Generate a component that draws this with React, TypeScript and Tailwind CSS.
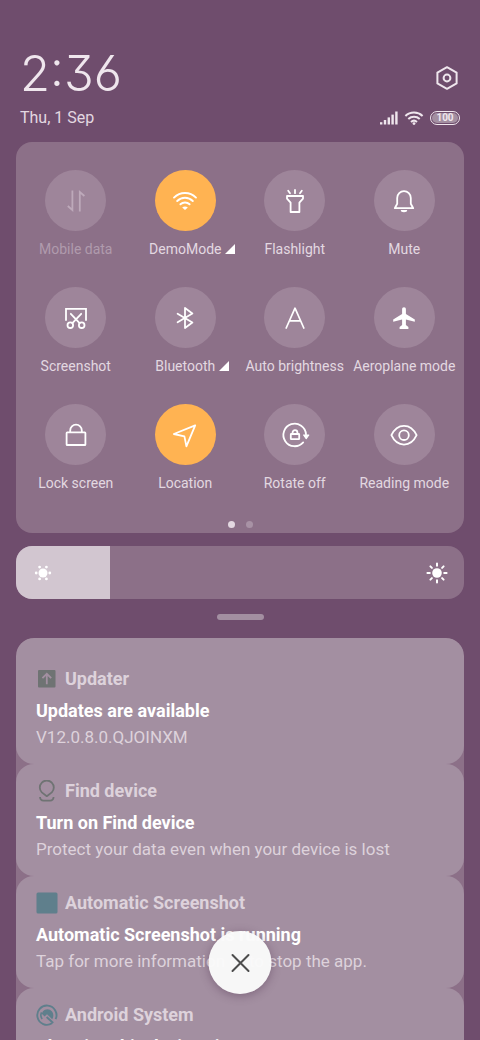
import { useState } from "react";
import type { ReactNode } from "react";

type Tile = {
  label: string;
  icon: ReactNode;
  active?: boolean;
  disabled?: boolean;
  expandable?: boolean;
};

type Notice = {
  app: string;
  title: string;
  text: string;
  icon: ReactNode;
};

function TileIcon({ children }: { children: ReactNode }) {
  return (
    <svg
      viewBox="0 0 30 30"
      className="h-[30px] w-[30px]"
      fill="none"
      stroke="currentColor"
      strokeWidth="1.8"
      strokeLinecap="round"
      strokeLinejoin="round"
      aria-hidden="true"
    >
      {children}
    </svg>
  );
}

const tiles: Tile[] = [
  {
    label: "Mobile data",
    disabled: true,
    icon: (
      <TileIcon>
        <path d="M11.4 4.5V24l-4.6-4M18.8 25.5V6l4.6 4" strokeLinecap="butt" strokeLinejoin="miter" />
      </TileIcon>
    ),
  },
  {
    label: "DemoMode",
    active: true,
    expandable: true,
    icon: (
      <TileIcon>
        <path d="M4 11.6a15.6 15.6 0 0 1 22 0M7.2 15a11 11 0 0 1 15.600 0M10.400 18.300a6.600 6.600 0 0 1 9.200 0" strokeWidth="1.9" />
        <path d="M15 24l-2.800-2.400a3.900 3.900 0 0 1 5.600 0z" fill="currentColor" stroke="none" />
      </TileIcon>
    ),
  },
  {
    label: "Flashlight",
    icon: (
      <TileIcon>
        <path d="M15 4v3.200M8.200 4.800l1.800 2.400M21.800 4.800L20 7.200" />
        <path d="M7 10h16v2.600l-3.600 4V26h-8.800v-9.400L7 12.600z" />
      </TileIcon>
    ),
  },
  {
    label: "Mute",
    icon: (
      <TileIcon>
        <path d="M5.800 22.200h18.400l-2.400-4.400v-5.800a6.800 6.800 0 0 0-13.600 0v5.800z" />
        <path d="M11.800 24h6.400a3.200 2.200 0 0 1-6.400 0z" fill="currentColor" stroke="none" />
      </TileIcon>
    ),
  },
  {
    label: "Screenshot",
    icon: (
      <TileIcon>
        <path d="M5 17V5.800h20V17" strokeLinejoin="miter" />
        <path d="M9.800 10.800l8.800 9.400M20.200 10.800l-8.800 9.400" />
        <circle cx="9.3" cy="22.2" r="2.8" />
        <circle cx="20.7" cy="22.2" r="2.8" />
      </TileIcon>
    ),
  },
  {
    label: "Bluetooth",
    expandable: true,
    icon: (
      <TileIcon>
        <path d="M7.600 10.800l14.800 8.800L15 25V5l7.400 5.400-14.800 8.800" />
      </TileIcon>
    ),
  },
  {
    label: "Auto brightness",
    icon: (
      <TileIcon>
        <path d="M6.200 25L15 5.200 23.800 25M9.600 17.800h10.800" strokeWidth="1.7" />
      </TileIcon>
    ),
  },
  {
    label: "Aeroplane mode",
    icon: (
      <TileIcon>
        <path
          d="M15 4.200c1.300 0 1.900.9 1.900 2.200v4.700l8.900 5.300v2.300l-8.900-2.300v5.600l2.500 2v2h-8.800v-2l2.500-2v-5.600l-8.900 2.300v-2.300l8.900-5.300V6.400c0-1.300.6-2.200 1.900-2.200z"
          fill="currentColor"
          stroke="none"
        />
      </TileIcon>
    ),
  },
  {
    label: "Lock screen",
    icon: (
      <TileIcon>
        <rect x="5.6" y="12.4" width="18.8" height="12.6" rx="0.6" />
        <path d="M9.200 12.200v-1.800a5.800 5.800 0 0 1 11.600 0v1.800" />
      </TileIcon>
    ),
  },
  {
    label: "Location",
    active: true,
    icon: (
      <TileIcon>
        <path d="M25.200 5.400L3.800 14l10.600 2.400 2 10z" />
      </TileIcon>
    ),
  },
  {
    label: "Rotate off",
    icon: (
      <TileIcon>
        <path d="M26 14.400A11.300 11.300 0 1 0 23.200 22.400" />
        <path d="M23.600 15h5.200l-2.600 3.600z" fill="currentColor" strokeWidth="1.2" />
        <rect x="10.8" y="14" width="8.4" height="5.200" rx="0.5" />
        <path d="M12.600 13.800v-1.200a2.400 2.400 0 0 1 4.800 0v1.200" />
      </TileIcon>
    ),
  },
  {
    label: "Reading mode",
    icon: (
      <TileIcon>
        <path d="M2.400 15.200C5.200 9.200 9.600 5.800 15 5.800s9.800 3.400 12.600 9.400c-2.800 6-7.200 9.400-12.600 9.400S5.200 21.200 2.400 15.200z" />
        <circle cx="15" cy="15.2" r="4.8" />
      </TileIcon>
    ),
  },
];

const notices: Notice[] = [
  {
    app: "Updater",
    title: "Updates are available",
    text: "V12.0.8.0.QJOINXM",
    icon: (
      <svg viewBox="0 0 22 22" className="h-[22px] w-[22px]" aria-hidden="true">
        <rect x="2" y="2" width="17.5" height="17.5" rx="1" fill="#6f7373" />
        <path d="M10.800 16.200V6M6.400 10.200l4.400-4.400 4.400 4.400" fill="none" stroke="#a38fa1" strokeWidth="1.8" />
      </svg>
    ),
  },
  {
    app: "Find device",
    title: "Turn on Find device",
    text: "Protect your data even when your device is lost",
    icon: (
      <svg viewBox="0 0 22 22" className="h-[22px] w-[22px]" fill="none" stroke="#6f7373" strokeWidth="1.8" aria-hidden="true">
        <path d="M10.800 16.200L5.800 12.400a7 7 0 1 1 10 0z" strokeLinejoin="round" />
        <path d="M4 17c.2 2.200 1.400 3.600 3.400 3.600h6.800c2 0 3.200-1.400 3.400-3.600" />
      </svg>
    ),
  },
  {
    app: "Automatic Screenshot",
    title: "Automatic Screenshot is running",
    text: "Tap for more information or to stop the app.",
    icon: (
      <svg viewBox="0 0 22 22" className="h-[22px] w-[22px]" aria-hidden="true">
        <rect x="0.5" y="0.5" width="21" height="21" rx="1.5" fill="#5f7f8c" />
      </svg>
    ),
  },
  {
    app: "Android System",
    title: "Charging this device via USB",
    text: "Tap for more options.",
    icon: (
      <svg viewBox="0 0 22 22" className="h-[22px] w-[22px]" fill="none" stroke="#5f7f8c" aria-hidden="true">
        <path d="M16 19.300A9.600 9.600 0 1 1 19.600 15.200" strokeWidth="1.9" />
        <path d="M6.200 15a6.200 6.200 0 0 1-.6-6.600" strokeWidth="1.6" />
        <path d="M6.800 7.400C9.400 4.400 13.600 4.600 15.800 7.200c2 2.400 2 5.600.4 8L11 10.200 8.600 12.400 5.800 9.800z" fill="#5f7f8c" stroke="none" />
        <path d="M10.600 13l6.600 6" strokeWidth="1.9" />
      </svg>
    ),
  },
];

function QuickTile({ tile }: { tile: Tile }) {
  const [on, setOn] = useState(Boolean(tile.active));
  const circle = on ? "bg-[#ffb352]" : "bg-[#9e859a]";

  return (
    <button
      type="button"
      disabled={tile.disabled}
      aria-pressed={on}
      onClick={() => setOn(!on)}
      className="flex min-w-0 flex-col items-center gap-2"
    >
      <span
        className={`flex h-[61px] w-[61px] items-center justify-center rounded-full ${circle} ${
          tile.disabled ? "text-[#bda9ba]" : "text-white"
        }`}
      >
        {tile.icon}
      </span>
      <span
        className={`flex items-center text-[14px] leading-5 whitespace-nowrap ${
          tile.disabled ? "text-[#b09bad]" : "text-[#e3d8e1]"
        }`}
      >
        {tile.label}
        {/* the arrow hangs outside so the label itself stays centred */}
        {tile.expandable && (
          <svg viewBox="0 0 10 10" className="-mr-[14px] ml-1 h-[10px] w-[10px]" aria-hidden="true">
            <path d="M10 0v10H0z" fill="#fff" />
          </svg>
        )}
      </span>
    </button>
  );
}

function StatusIcons() {
  return (
    <div className="flex items-center gap-[6px] text-[#efe6ed]">
      <svg viewBox="0 0 18 14" className="h-[14px] w-[18px]" fill="currentColor" aria-hidden="true">
        <rect x="0" y="11.2" width="2.4" height="2.3" />
        <rect x="3.8" y="9" width="2.4" height="4.5" />
        <rect x="7.6" y="6.4" width="2.4" height="7.1" />
        <rect x="11.4" y="3.6" width="2.4" height="9.9" />
        <rect x="15.2" y="0.5" width="2.4" height="13" />
      </svg>
      <svg viewBox="0 0 20 14" className="h-[14px] w-[20px]" fill="none" stroke="currentColor" strokeWidth="2" aria-hidden="true">
        <path d="M1.400 5a12.600 12.600 0 0 1 17.200 0M4.300 8.100a8.400 8.400 0 0 1 11.400 0M7 11a4.500 4.500 0 0 1 6 0" />
        <circle cx="10" cy="12.6" r="1.4" fill="currentColor" stroke="none" />
      </svg>
      <span className="flex h-[14px] w-[30px] items-center justify-center rounded-full border border-[#efe6ed] p-px">
        <span className="flex h-full w-full items-center justify-center rounded-full bg-[#a38fa1] text-[10px] leading-none font-bold">
          100
        </span>
      </span>
    </div>
  );
}

function BrightnessSlider() {
  const [value, setValue] = useState(21);

  return (
    <div className="relative mx-4 mt-[13px] flex h-[53px] shrink-0 items-center justify-between overflow-hidden rounded-2xl bg-[#8c7088] px-4 text-white">
      <div className="absolute inset-y-0 left-0 bg-[#d2c6d0]" style={{ width: `${value}%` }} />
      <svg viewBox="0 0 22 22" className="relative h-[22px] w-[22px]" fill="currentColor" aria-hidden="true">
        <circle cx="11" cy="11" r="4.5" />
        <circle cx="4.2" cy="11" r="1.4" />
        <circle cx="17.8" cy="11" r="1.4" />
        <circle cx="7.6" cy="5.1" r="1.4" />
        <circle cx="14.4" cy="5.1" r="1.4" />
        <circle cx="7.6" cy="16.9" r="1.4" />
        <circle cx="14.4" cy="16.9" r="1.4" />
      </svg>
      <svg
        viewBox="0 0 22 22"
        className="relative h-[22px] w-[22px]"
        fill="none"
        stroke="currentColor"
        strokeWidth="2"
        strokeLinecap="round"
        aria-hidden="true"
      >
        <circle cx="11" cy="11" r="4.8" fill="currentColor" stroke="none" />
        <path d="M11 1.400v2.400M11 18.200v2.400M1.400 11h2.400M18.200 11h2.400M4.400 4.400l1.500 1.500M16.100 16.100l1.500 1.500M4.400 17.600l1.500-1.500M16.100 5.900l1.500-1.500" />
      </svg>
      <input
        type="range"
        min={0}
        max={100}
        value={value}
        onChange={(e) => setValue(Number(e.target.value))}
        aria-label="Brightness"
        className="absolute inset-0 h-full w-full cursor-pointer opacity-0"
      />
    </div>
  );
}

function NoticeCard({ notice }: { notice: Notice }) {
  return (
    <article className="rounded-[18px] bg-[#a38fa1] px-5 py-[15px] first:pt-[29px]">
      <div className="flex h-6 items-center gap-[7px]">
        {notice.icon}
        <span className="text-[18px] leading-6 font-bold text-[#ddd2db]">{notice.app}</span>
      </div>
      <h2 className="mt-[6px] text-[18px] leading-7 font-bold text-white">{notice.title}</h2>
      <p className="text-[17px] leading-6 text-[#ddd2db]">{notice.text}</p>
    </article>
  );
}

export default function App() {
  return (
    <main className="relative flex h-screen flex-col overflow-hidden bg-[#6f4d6d] font-[Roboto,sans-serif]">
      {/* Clock and status */}
      <header className="flex items-end justify-between px-5 pt-[42px] pb-[14px]">
        <div>
          <time className="block font-[Inter,sans-serif] text-[49px] leading-[64px] font-light text-[#efe6ed] [font-feature-settings:'cv03','cv09']">
            2:36
          </time>
          <p className="mt-[2px] text-[16px] leading-5 text-[#e3d8e1]">Thu, 1 Sep</p>
        </div>
        <div className="flex flex-col items-end gap-5 pb-[3px]">
          <button type="button" aria-label="Settings" className="text-[#efe6ed]">
            <svg viewBox="0 0 26 26" className="h-[26px] w-[26px]" fill="none" stroke="currentColor" strokeWidth="2" strokeLinejoin="round" aria-hidden="true">
              <path d="M13 2.200l9.600 5.400v10.800L13 23.800l-9.600-5.400V7.600z" />
              <circle cx="13" cy="13" r="3.4" />
            </svg>
          </button>
          <StatusIcons />
        </div>
      </header>

      {/* Quick toggles */}
      <section className="mx-4 shrink-0 rounded-2xl bg-[#8c7088] px-[5px] pt-7 pb-[5px]">
        <div className="grid grid-cols-4 gap-y-7">
          {tiles.map((tile) => (
            <QuickTile key={tile.label} tile={tile} />
          ))}
        </div>
        <div className="mt-7 flex justify-center gap-[11px]">
          <span className="h-[7px] w-[7px] rounded-full bg-[#e3d8e1]" />
          <span className="h-[7px] w-[7px] rounded-full bg-[#a892a5]" />
        </div>
      </section>

      <BrightnessSlider />

      <div className="mx-auto mt-[15px] h-[6px] w-[47px] shrink-0 rounded-full bg-[#a38fa1]" />

      {/* Notifications */}
      <section className="mx-4 mt-[18px] min-h-0 flex-1 overflow-hidden rounded-t-[18px] bg-[#8c7088]">
        {notices.map((notice) => (
          <NoticeCard key={notice.app} notice={notice} />
        ))}
      </section>

      <button
        type="button"
        aria-label="Clear all notifications"
        className="absolute bottom-[46px] left-1/2 flex h-[63px] w-[63px] -translate-x-1/2 items-center justify-center rounded-full bg-[#fafafa]/97 text-[#4d4d4d] shadow-[0_2px_10px_rgba(60,30,60,0.35)]"
      >
        <svg viewBox="0 0 20 20" className="h-5 w-5" fill="none" stroke="currentColor" strokeWidth="2" strokeLinecap="round" aria-hidden="true">
          <path d="M2 2l16 16M18 2L2 18" />
        </svg>
      </button>
    </main>
  );
}
